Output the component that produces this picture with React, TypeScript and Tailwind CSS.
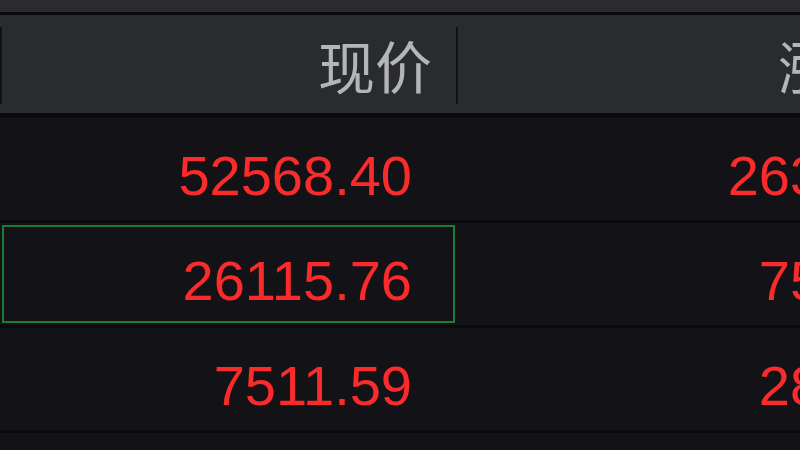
const rows = [
  { price: "52568.40", change: "263.29", selected: false },
  { price: "26115.76", change: "75.41", selected: true },
  { price: "7511.59", change: "28.66", selected: false },
];

function HeaderCell({ label, pr }: { label: string; pr: string }) {
  return (
    <div className={`flex h-full items-center justify-end ${pr}`}>
      <span
        className="text-[57px] leading-none text-[#b4b5b8]"
        style={{ fontFamily: '"Noto Sans CJK SC", "Noto Sans", sans-serif' }}
      >
        {label}
      </span>
    </div>
  );
}

export default function App() {
  return (
    <div
      className="h-[450px] w-[800px] overflow-hidden bg-[#131317]"
      style={{ fontFamily: '"Liberation Sans", Arial, sans-serif' }}
    >
      <div className="h-[12px] bg-[#2a2b2f]" />
      <div className="h-[3px] bg-[#0b0b0d]" />

      {/* header */}
      <div className="grid h-[98px] grid-cols-[456px_456px] bg-[#2a2b2f]">
        <div className="relative">
          <div className="absolute left-0 top-[12px] h-[77px] w-[2px] bg-[#121214]" />
          <HeaderCell label="现价" pr="pr-[24px]" />
        </div>
        <div className="relative">
          <div className="absolute left-0 top-[12px] h-[77px] w-[2px] bg-[#121214]" />
          <HeaderCell label="涨跌" pr="pr-[20px]" />
        </div>
      </div>
      <div className="h-[5px] bg-[#0b0b0d]" />

      {/* rows */}
      {rows.map((r) => (
        <div key={r.price} className="flex flex-col">
          <div className="grid h-[102px] grid-cols-[456px_456px]">
            <div className="p-[2px] pr-[1px]">
              <div
                className={`flex h-full items-center justify-end pt-[14px] pr-[41px] ${
                  r.selected ? "border-2 border-[#1b7d35]" : "border-2 border-transparent"
                }`}
              >
                <span className="text-[56px] leading-none text-[#fc2b2b]">{r.price}</span>
              </div>
            </div>
            <div className="flex items-center justify-end pt-[14px] pr-[13px]">
              <span className="text-[56px] leading-none text-[#fc2b2b]">{r.change}</span>
            </div>
          </div>
          <div className="h-[3px] bg-[#0b0b0d]" />
        </div>
      ))}
    </div>
  );
}
